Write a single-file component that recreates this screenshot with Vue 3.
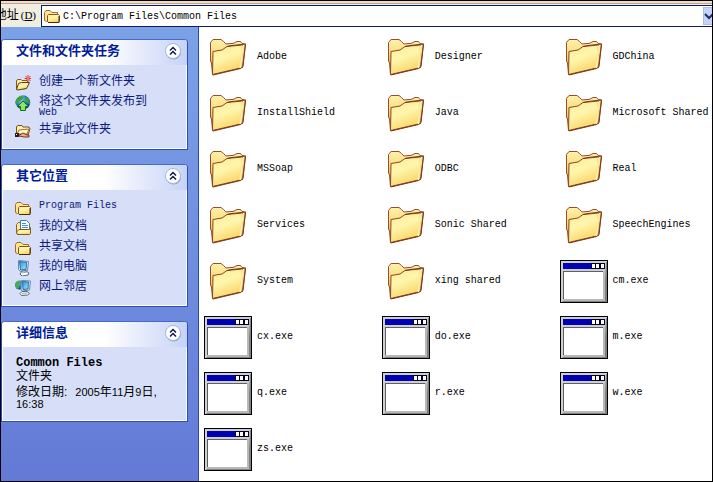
<script setup>
import { ref } from 'vue'

const path = ref('C:\\Program Files\\Common Files')
const open = ref({ tasks: true, places: true, details: true })
const toggle = (key) => { open.value[key] = !open.value[key] }

const panels = [
  {
    key: 'tasks',
    title: '文件和文件夹任务',
    links: [
      { icon: 'new-folder', text: '创建一个新文件夹' },
      { icon: 'publish', text: '将这个文件夹发布到', more: 'Web' },
      { icon: 'share', text: '共享此文件夹' },
    ],
  },
  {
    key: 'places',
    title: '其它位置',
    links: [
      { icon: 'small-folder', text: 'Program Files' },
      { icon: 'documents', text: '我的文档' },
      { icon: 'small-folder', text: '共享文档' },
      { icon: 'computer', text: '我的电脑' },
      { icon: 'network', text: '网上邻居' },
    ],
  },
  { key: 'details', title: '详细信息' },
]

const folders = ['Adobe', 'Designer', 'GDChina', 'InstallShield', 'Java', 'Microsoft Shared', 'MSSoap', 'ODBC', 'Real', 'Services', 'Sonic Shared', 'SpeechEngines', 'System', 'xing shared']
const programs = ['cm.exe', 'cx.exe', 'do.exe', 'm.exe', 'q.exe', 'r.exe', 'w.exe', 'zs.exe']
const items = [
  ...folders.map((name) => ({ name, icon: 'folder' })),
  ...programs.map((name) => ({ name, icon: 'program' })),
]
</script>

<template>
  <svg class="defs" width="0" height="0" aria-hidden="true">
    <defs>
      <linearGradient id="g-front" x1="0" y1="0" x2="0.4" y2="1">
        <stop offset="0" stop-color="#fdea98" />
        <stop offset="0.5" stop-color="#fef6ac" />
        <stop offset="1" stop-color="#fad668" />
      </linearGradient>
      <linearGradient id="g-back" x1="0" y1="0" x2="0" y2="1">
        <stop offset="0" stop-color="#fff2aa" />
        <stop offset="0.4" stop-color="#fbdc80" />
        <stop offset="1" stop-color="#d98c30" />
      </linearGradient>
      <linearGradient id="g-screen" x1="0" y1="0" x2="1" y2="1">
        <stop offset="0" stop-color="#2a8fe0" />
        <stop offset="1" stop-color="#9ff0fc" />
      </linearGradient>
      <radialGradient id="g-globe" cx="0.35" cy="0.3" r="0.8">
        <stop offset="0" stop-color="#8cd8f4" />
        <stop offset="0.5" stop-color="#2877c8" />
        <stop offset="1" stop-color="#12317c" />
      </radialGradient>
    </defs>
    <symbol id="folder" viewBox="0 0 48 48">
      <path d="M6.5 14V9.500L9 6.500 17 6.500 19.500 8.500 22 11 27 10.500 29 10.500 33 8.500H36.500L38 10.500 41.500 11 38.500 34.500 8.500 41.500 7.500 30 6.500 28Z" fill="url(#g-back)" stroke="#984c2c" />
      <path d="M33 11.5 38.5 12 36 33 34 35Z" fill="#ffe58c" />
      <path d="M9 18.5 18 17 23 13.5 28 13 38.500 12 36.500 35 8.500 41.500Z" fill="url(#g-front)" stroke="#8a4526" />
      <path d="M38.500 12.500 36.500 35" fill="none" stroke="#ffefa0" stroke-width="2" />
      <path d="M23 13.500 28 12.500 41.500 11 39 33.500 36.500 35.500 9 42" fill="none" stroke="#7b3a1a" />
    </symbol>
    <symbol id="program" viewBox="0 0 48 48">
      <path d="M0 3h48v43H0Z" fill="#000" />
      <path d="M1 4h46v41H1Z" fill="#cfcfcf" />
      <path d="M46 5h1v40H2l2-2h40Z" fill="#808080" />
      <path d="M3 6h42v6H3Z" fill="#0000b4" />
      <path d="M31 6h14v6H31Z" fill="#000030" />
      <path d="M32 7h3v4h-3ZM36 7h3v4h-3ZM41 7h3v4h-3Z" fill="#fff" />
      <path d="M3 14h40v28H3Z" fill="#606060" />
      <path d="M4 15h39v27H4Z" fill="#fff" />
      <path d="M3 42h41v2H3ZM43 14h2v30h-2Z" fill="#b8b8b8" />
    </symbol>
    <symbol id="small-folder" viewBox="0 0 16 16">
      <path d="M.5 12.5v-8L2 2.500h4l2 2h5.500v9h-11Z" fill="#ffe794" stroke="#a06a2a" />
      <path d="M3.500 13.500v-6l1-1h10l1 1v6l-1 1h-10Z" fill="url(#g-front)" stroke="#8b5422" />
      <path d="M4 14.500h11V8" fill="none" stroke="#4c2a10" />
    </symbol>
    <symbol id="new-folder" viewBox="0 0 16 16">
      <path d="M1.500 14.500v-9L3 4.500h3l1 1h5l1 2-2 6Z" fill="#fff0a2" stroke="#805824" />
      <path d="m1.500 14.500 2-6 3-1h8l-3 6-9 1.500Z" fill="url(#g-front)" stroke="#5c3c18" />
      <path d="M13 0v7M9.500 3.500h6.500M10.500 1l5 5M15.500 1l-5 5" stroke="#e03028" />
      <circle cx="13" cy="3.500" r="1" fill="#ff9080" />
    </symbol>
    <symbol id="publish" viewBox="0 0 16 16">
      <circle cx="8" cy="7.500" r="7.200" fill="url(#g-globe)" />
      <path d="M2 3 5 1l4 1-2 3-4 2-2 3-1-3ZM10 2l4 2 1 5-3-1-2-3Z" fill="#3ca43c" />
      <path d="m8 6 5.500 5.500H10.500v4h-5v-4h-3Z" fill="#8ae860" stroke="#1c6c20" />
    </symbol>
    <symbol id="share" viewBox="0 0 16 16">
      <path d="M1.500 11.500v-8L3 2.500h4l1 1.500h6l1 2-2 6Z" fill="#fff0a8" stroke="#755022" />
      <path d="m2 11 2-4 10-1-2 5Z" fill="#fff6c4" stroke="#9d7338" />
      <path d="M4 12.500 8 10l4 2h2v2H9l-5-1Z" fill="#f4ac83" stroke="#7a3828" />
      <path d="M0 10h4v4H0Z" fill="#252020" />
      <path d="M1 11h1v1H1Z" fill="#fff" />
    </symbol>
    <symbol id="documents" viewBox="0 0 16 16">
      <path d="M1.500 12.500v-8l2-2H6v5h9.500v6l-1 1h-12Z" fill="#ffe794" stroke="#876226" />
      <path d="M5.500.5h6l3 3v9h-9Z" fill="#fff" stroke="#397bb9" />
      <path d="M7 3.500h4M7 5.500h6M7 7.500h6" stroke="#4c91d6" />
      <path d="M1.500 12 4 9.500h10.500l1 1v3l-1 1h-12Z" fill="url(#g-front)" stroke="#80551f" />
    </symbol>
    <symbol id="computer" viewBox="0 0 16 16">
      <path d="m3.500.5 10 1-1 9-7 1-2-2Z" fill="#e6eff6" stroke="#70869e" />
      <path d="m4.500 1.500 7 1-.5 7-5.500.500Z" fill="url(#g-screen)" stroke="#236db2" />
      <path d="M7 11h4l3 2-1 2-6 1-2-2Z" fill="#fff" stroke="#53657a" />
      <path d="m7 13 5-1" stroke="#97a8b9" />
    </symbol>
    <symbol id="network" viewBox="0 0 16 16">
      <circle cx="4.500" cy="5" r="4.500" fill="url(#g-globe)" />
      <path d="M1 2 4 1l2 2-3 2 1 3-2 1-2-3Z" fill="#43ae40" />
      <path d="m6.500.5 9 .5-1 9-7 1-1.500-1Z" fill="#e6eff6" stroke="#70869e" />
      <path d="m7.500 1.500 6 .5-.5 7-5 .5Z" fill="url(#g-screen)" stroke="#236db2" />
      <path d="M7 11.500h5l2.500 2-2 1.500-6 .5-1.500-2Z" fill="#fff" stroke="#53657a" />
      <path d="m7 13.500 5-.5" stroke="#97a8b9" />
    </symbol>
  </svg>

  <div class="window">
    <form class="bar" @submit.prevent>
      <label class="bar-label" for="path"><span>地址</span><span class="key">(<u>D</u>)</span></label>
      <div class="field">
        <svg class="icon16" aria-hidden="true"><use href="#small-folder" /></svg>
        <input id="path" v-model="path" type="text" spellcheck="false" />
        <button class="drop" type="button" aria-label="地址">
          <svg viewBox="0 0 10 8" aria-hidden="true"><path d="m1 2 4 4 4-4" /></svg>
        </button>
      </div>
    </form>

    <div class="content">
      <aside class="side">
        <section v-for="p in panels" :key="p.key" class="panel">
          <header class="head">
            <h2>{{ p.title }}</h2>
            <button class="collapse" type="button" :aria-label="p.title" :aria-expanded="open[p.key]" @click="toggle(p.key)">
              <svg viewBox="0 0 18 18" aria-hidden="true">
                <circle cx="9.500" cy="10" r="7.500" fill="#8f9fc8" />
                <circle cx="9" cy="9" r="7.500" fill="#fff" stroke="#a9b6dc" />
                <path d="m6 8.500 3-3 3 3M6 12.500l3-3 3 3" fill="none" stroke="#10184c" stroke-width="1.500" />
              </svg>
            </button>
          </header>
          <div v-if="open[p.key]" class="body">
            <ul v-if="p.links" class="links">
              <li v-for="l in p.links" :key="l.text">
                <a href="#">
                  <svg class="icon16" aria-hidden="true"><use :href="'#' + l.icon" /></svg>
                  <span :class="{ latin: l.text === 'Program Files' }">{{ l.text }}<span v-if="l.more" class="latin">{{ l.more }}</span></span>
                </a>
              </li>
            </ul>
            <div v-else class="info">
              <strong>Common Files</strong>
              <p>文件夹</p>
              <p class="date"><span class="term">修改日期:</span><span class="num">2005</span>年<span class="num">11</span>月<span class="num">9</span>日, <span class="num">16:38</span></p>
            </div>
          </div>
        </section>
      </aside>

      <main class="files">
        <div v-for="item in items" :key="item.name" class="tile">
          <svg class="icon48" aria-hidden="true"><use :href="'#' + item.icon" /></svg>
          <span>{{ item.name }}</span>
        </div>
      </main>
    </div>
  </div>
</template>

<style>
body {
  margin: 0;
}
</style>

<style scoped>
* {
  box-sizing: border-box;
}
.defs {
  position: absolute;
}
.window {
  display: flex;
  flex-direction: column;
  min-height: 100vh;
  border: 1px solid #000;
  overflow: hidden;
  background: #fff;
  color: #000;
  font: 12px/12px "Liberation Sans", "Noto Sans CJK SC", sans-serif;
}
.bar {
  display: flex;
  height: 26px;
  padding-top: 4px;
  background: linear-gradient(#f2dcc8 0 2px, #c0a48c 2px 3px, #f0eee0 3px);
}
.bar-label {
  display: flex;
  justify-content: flex-end;
  align-items: center;
  gap: 2px;
  width: 40px;
  flex: none;
  padding: 0 5px 2px 0;
  white-space: nowrap;
}
.key {
  font-family: "Liberation Serif", serif;
  font-size: 11px;
}
.field {
  display: flex;
  flex: 1;
  align-items: center;
  min-width: 0;
  padding-left: 2px;
  gap: 3px;
  background: #fff;
  border: 1px solid #101c60;
  border-right: 0;
}
.field input {
  flex: 1;
  min-width: 0;
  padding: 2px 0 0;
  border: 0;
  outline: 0;
  background: none;
  color: #000;
  font: 10px/12px "Liberation Mono", monospace;
}
.drop {
  width: 9px;
  height: 18px;
  padding: 0;
  overflow: hidden;
  border: 1px solid #a9bdf0;
  border-right: 0;
  background: #c4d4fc;
}
.drop svg {
  display: block;
  width: 10px;
  height: 8px;
  fill: none;
  stroke: #20305c;
  stroke-width: 2;
}
.content {
  display: flex;
  flex: 1;
}
.side {
  display: flex;
  flex-direction: column;
  flex: none;
  gap: 14px;
  width: 198px;
  padding: 12px 10px 12px 0;
  border-right: 1px solid #2c48b8;
  background: linear-gradient(#7ba2e7, #647ad6);
}
.panel {
  border: 1px solid #2a4cc0;
  border-top-color: #4868cc;
  border-radius: 4px 4px 0 0;
  background: #fff;
}
.head {
  display: flex;
  align-items: center;
  justify-content: space-between;
  height: 25px;
  padding: 0 5px 3px 14px;
  border-radius: 3px 3px 0 0;
  background: linear-gradient(90deg, #fff 55%, #c6d3f7);
}
h2 {
  margin: 0;
  color: #001c9c;
  font-size: 13px;
  line-height: 16px;
  font-weight: 700;
}
.collapse {
  width: 18px;
  height: 18px;
  padding: 0;
  border: 0;
  background: none;
}
.collapse svg {
  display: block;
  width: 18px;
  height: 18px;
}
.body {
  margin: 0 1px 1px;
  background: #d6dff7;
}
.links {
  display: flex;
  flex-direction: column;
  gap: 4px;
  margin: 0;
  padding: 10px 12px 9px;
  list-style: none;
}
.links a {
  display: flex;
  align-items: flex-start;
  gap: 8px;
  color: #0c1880;
  text-decoration: none;
}
.latin {
  display: block;
  font: 10px/12px "Liberation Mono", monospace;
}
.icon16 {
  width: 16px;
  height: 16px;
  flex: none;
}
.info {
  padding: 9px 12px 10px 13px;
}
.info strong {
  display: block;
  font: 700 12px/14px "Liberation Mono", monospace;
}
.info p {
  margin: 0;
}
.info .date {
  margin-top: 4px;
}
.term {
  margin-right: 8px;
}
.num {
  font-size: 11px;
}
.files {
  display: grid;
  grid-template-columns: 35% 35% 1fr;
  grid-auto-rows: 56px;
  flex: 1;
  min-width: 0;
  padding: 2px 0 0 5px;
  font: 10px/12px "Liberation Mono", monospace;
}
.tile {
  display: flex;
  align-items: center;
  gap: 5px;
  min-width: 0;
  white-space: nowrap;
}
.icon48 {
  width: 48px;
  height: 48px;
  flex: none;
}
</style>
